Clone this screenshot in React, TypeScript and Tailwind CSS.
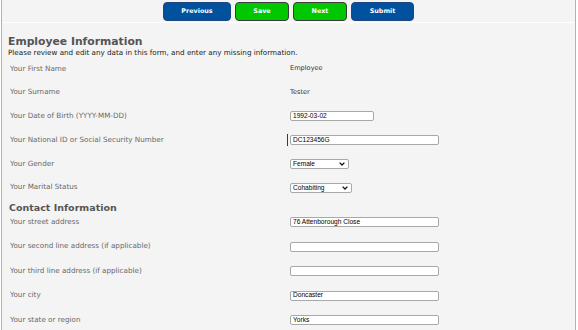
import React from "react";

const labelFont = { fontFamily: "'DejaVu Sans', Verdana, sans-serif" };
const fieldFont = { fontFamily: "'Liberation Sans', Arial, sans-serif" };

type Field =
  | { kind: "text"; value: string }
  | { kind: "input"; value: string; width: string; marker?: boolean }
  | { kind: "select"; value: string; width: string };

const employeeRows: { label: string; field: Field }[] = [
  { label: "Your First Name", field: { kind: "text", value: "Employee" } },
  { label: "Your Surname", field: { kind: "text", value: "Tester" } },
  { label: "Your Date of Birth (YYYY-MM-DD)", field: { kind: "input", value: "1992-03-02", width: "w-[84px]" } },
  {
    label: "Your National ID or Social Security Number",
    field: { kind: "input", value: "DC123456G", width: "w-[149px]", marker: true },
  },
  { label: "Your Gender", field: { kind: "select", value: "Female", width: "w-[59px]" } },
  { label: "Your Marital Status", field: { kind: "select", value: "Cohabiting", width: "w-[62px]" } },
];

const contactRows: { label: string; field: Field }[] = [
  { label: "Your street address", field: { kind: "input", value: "76 Attenborough Close", width: "w-[149px]" } },
  { label: "Your second line address (if applicable)", field: { kind: "input", value: "", width: "w-[149px]" } },
  { label: "Your third line address (if applicable)", field: { kind: "input", value: "", width: "w-[149px]" } },
  { label: "Your city", field: { kind: "input", value: "Doncaster", width: "w-[149px]" } },
  { label: "Your state or region", field: { kind: "input", value: "Yorks", width: "w-[149px]" } },
];

function FieldView({ field }: { field: Field }) {
  if (field.kind === "text") {
    return (
      <span className="text-[6.6px] text-[#333]" style={labelFont}>
        {field.value}
      </span>
    );
  }
  if (field.kind === "input") {
    return (
      <div className="flex items-center">
        {field.marker && <span className="-ml-[3px] mr-[2px] h-[12px] w-px bg-[#1c3a8c]" />}
        <div
          className={`${field.width} flex h-[10px] items-center rounded-[2px] border border-[#a8a8a8] bg-white pl-[2px] text-[6.6px] leading-none text-black`}
          style={fieldFont}
        >
          {field.value}
        </div>
      </div>
    );
  }
  return (
    <div
      className={`${field.width} flex h-[10px] items-center justify-between rounded-[2px] border border-[#a8a8a8] bg-white pl-[2px] pr-[3px] text-[6.6px] leading-none text-black`}
      style={fieldFont}
    >
      <span>{field.value}</span>
      <svg width="6" height="4" viewBox="0 0 6 4">
        <path d="M0.6 0.6 L3 3 L5.4 0.6" fill="none" stroke="#111" strokeWidth="1.3" />
      </svg>
    </div>
  );
}

function NavButton({ label, color, width }: { label: string; color: "blue" | "green"; width: string }) {
  const tone =
    color === "blue"
      ? "bg-[#00519e] border-[#1f4680]"
      : "bg-[#00c800] border-[#3b3b3b]";
  return (
    <button
      className={`${tone} ${width} flex h-[19px] items-center justify-center rounded-[4px] border text-[6.4px] font-bold text-white`}
      style={labelFont}
    >
      {label}
    </button>
  );
}

export default function App() {
  return (
    <div className="h-[330px] w-[578px] overflow-hidden bg-white">
      <div className="ml-px flex h-[330px] w-[575px] flex-col border-x border-[#7dd87d] bg-[#f4f4f4]">
        {/* Toolbar */}
        <div className="mx-px flex h-[23px] shrink-0 items-start justify-center gap-[4px] border-b border-white pt-[2px]">
          <NavButton label="Previous" color="blue" width="w-[68px]" />
          <NavButton label="Save" color="green" width="w-[54px]" />
          <NavButton label="Next" color="green" width="w-[54px]" />
          <NavButton label="Submit" color="blue" width="w-[63px]" />
        </div>

        <div className="pt-[12px]" style={labelFont}>
          <h1 className="pl-[6px] text-[10.8px] font-bold leading-[13px] text-[#555]">Employee Information</h1>
          <p className="pl-[6px] text-[7.2px] leading-[9px] text-[#222]">
            Please review and edit any data in this form, and enter any missing information.
          </p>

          <div className="flex flex-col">
            {employeeRows.map((row) => (
              <div key={row.label} className="grid h-[23.8px] grid-cols-[288px_1fr] items-center">
                <span className="pl-[8px] text-[7.2px] text-[#686868]">{row.label}</span>
                <FieldView field={row.field} />
              </div>
            ))}
          </div>

          <h2 className="h-[15px] pl-[7px] text-[9.5px] font-bold leading-[15px] text-[#555]">Contact Information</h2>

          <div className="flex flex-col">
            {contactRows.map((row) => (
              <div key={row.label} className="grid h-[24.5px] grid-cols-[288px_1fr] items-start">
                <div className="flex h-[15px] items-center pl-[8px] text-[7.2px] text-[#686868]">{row.label}</div>
                <div className="flex h-[15px] items-center">
                  <FieldView field={row.field} />
                </div>
              </div>
            ))}
          </div>
        </div>
      </div>
    </div>
  );
}
